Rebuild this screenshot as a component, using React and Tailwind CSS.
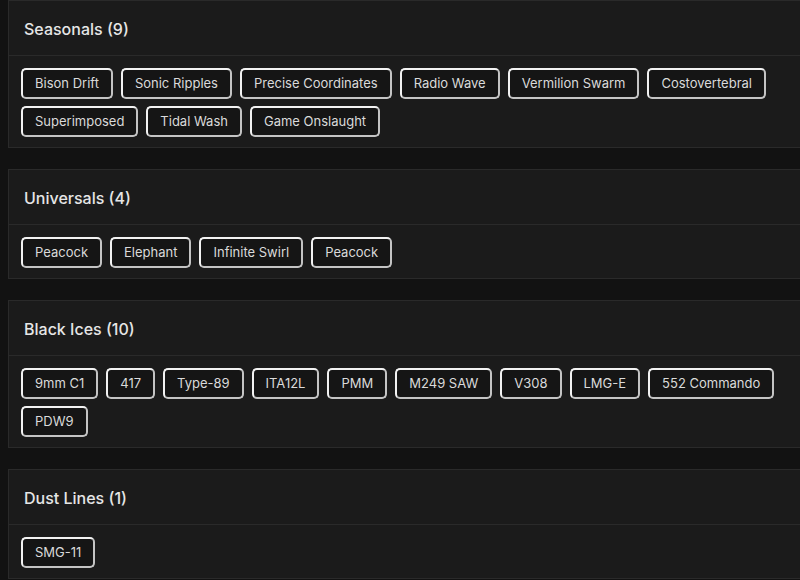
const groups = [
  {
    title: 'Seasonals',
    items: ['Bison Drift', 'Sonic Ripples', 'Precise Coordinates', 'Radio Wave', 'Vermilion Swarm', 'Costovertebral', 'Superimposed', 'Tidal Wash', 'Game Onslaught'],
  },
  {
    title: 'Universals',
    items: ['Peacock', 'Elephant', 'Infinite Swirl', 'Peacock'],
  },
  {
    title: 'Black Ices',
    items: ['9mm C1', '417', 'Type-89', 'ITA12L', 'PMM', 'M249 SAW', 'V308', 'LMG-E', '552 Commando', 'PDW9'],
  },
  {
    title: 'Dust Lines',
    items: ['SMG-11'],
  },
];

function Chip({ label }) {
  return (
    <span className="h-[31px] px-3 flex items-center rounded-[5px] border-2 border-t-[#f2f2f2] border-l-[#f2f2f2] border-r-[#c4c4c4] border-b-[#c4c4c4] bg-[#151515] text-[13px] text-[#dadada] whitespace-nowrap">
      {label}
    </span>
  );
}

export default function App() {
  return (
    <div
      className="w-[800px] h-[580px] overflow-hidden bg-[#121212]"
      style={{ fontFamily: 'Inter, "Open Sans", sans-serif' }}
    >
      <div className="pl-2 w-[830px]">
        {groups.map((g) => (
          <section key={g.title} className="mb-[21px] border border-[#2a2a2a] bg-[#1b1b1b]">
            <header className="h-[55px] flex items-center pt-[2px] px-[15px] border-b border-[#2a2a2a]">
              <h2 className="text-[16px] font-medium text-[#e6e6e6]">
                {g.title} ({g.items.length})
              </h2>
            </header>
            <div className="pt-3 pb-[10px] px-3 flex flex-wrap gap-x-2 gap-y-[7px]">
              {g.items.map((it, i) => (
                <Chip key={i} label={it} />
              ))}
            </div>
          </section>
        ))}
      </div>
    </div>
  );
}
